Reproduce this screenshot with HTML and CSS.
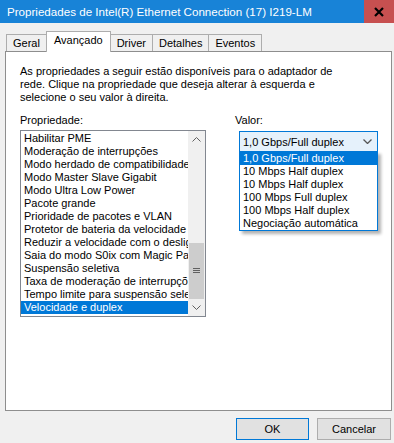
FILE: index.html
```html
<!DOCTYPE html>
<html lang="pt">
<head>
  <meta charset="UTF-8">
  <title>Propriedades de Intel(R) Ethernet Connection (17) I219-LM</title>
  <link rel="stylesheet" href="styles.css">
</head>
<body>
  <div class="titlebar">
    <span class="title">Propriedades de Intel(R) Ethernet Connection (17) I219-LM</span>
    <div class="close">
      <svg width="10" height="10" viewBox="0 0 10 10"><path d="M1 1 L9 9 M9 1 L1 9" stroke="#000" stroke-width="2.2"/></svg>
    </div>
  </div>

  <div class="tabs">
    <div class="tab">Geral</div>
    <div class="tab active">Avançado</div>
    <div class="tab">Driver</div>
    <div class="tab">Detalhes</div>
    <div class="tab">Eventos</div>
  </div>

  <div class="panel">
    <p class="intro">As propriedades a seguir estão disponíveis para o adaptador de<br>rede. Clique na propriedade que deseja alterar à esquerda e<br>selecione o seu valor à direita.</p>

    <div class="fields">
      <div class="field prop-field">
        <label>Propriedade:</label>
        <div class="listbox">
          <ul class="items">
            <li>Habilitar PME</li>
            <li>Moderação de interrupções</li>
            <li>Modo herdado de compatibilidade de</li>
            <li>Modo Master Slave Gigabit</li>
            <li>Modo Ultra Low Power</li>
            <li>Pacote grande</li>
            <li>Prioridade de pacotes e VLAN</li>
            <li>Protetor de bateria da velocidade de</li>
            <li>Reduzir a velocidade com o desligamento</li>
            <li>Saia do modo S0ix com Magic Packet</li>
            <li>Suspensão seletiva</li>
            <li>Taxa de moderação de interrupções</li>
            <li>Tempo limite para suspensão seletiva</li>
            <li class="selected">Velocidade e duplex</li>
          </ul>
          <div class="scrollbar">
            <div class="arrow">
              <svg width="9" height="5" viewBox="0 0 9 5"><path d="M0.5 4.5 L4.5 0.5 L8.5 4.5" fill="none" stroke="#606060"/></svg>
            </div>
            <div class="track"></div>
            <div class="thumb">
              <svg width="7" height="6" viewBox="0 0 7 6"><path d="M0 0.5 H7 M0 2.5 H7 M0 4.5 H7" stroke="#606060"/></svg>
            </div>
            <div class="arrow">
              <svg width="9" height="5" viewBox="0 0 9 5"><path d="M0.5 0.5 L4.5 4.5 L8.5 0.5" fill="none" stroke="#606060"/></svg>
            </div>
          </div>
        </div>
      </div>

      <div class="field value-field">
        <label>Valor:</label>
        <div class="combo">
          <span>1,0 Gbps/Full duplex</span>
          <svg width="9" height="5" viewBox="0 0 9 5"><path d="M0.5 0.5 L4.5 4.5 L8.5 0.5" fill="none" stroke="#555" stroke-width="1.3"/></svg>
          <ul class="dropdown">
            <li class="selected">1,0 Gbps/Full duplex</li>
            <li>10 Mbps Half duplex</li>
            <li>10 Mbps Half duplex</li>
            <li>100 Mbps Full duplex</li>
            <li>100 Mbps Half duplex</li>
            <li>Negociação automática</li>
          </ul>
        </div>
      </div>
    </div>
  </div>

  <div class="buttons">
    <button class="btn default">OK</button>
    <button class="btn">Cancelar</button>
  </div>
</body>
</html>
```

FILE: styles.css
```css
body {
  margin: 0;
  background: #f0f0f0;
  font-family: "Liberation Sans", Arial, sans-serif;
  font-size: 11px;
  color: #000;
}

ul {
  list-style: none;
  margin: 0;
  padding: 0;
}

/* title bar */
.titlebar {
  display: flex;
  justify-content: space-between;
  height: 23px;
  background: #1883d7;
  color: #fff;
}

.title {
  font-size: 11.6px;
  line-height: 23px;
  padding-left: 7px;
}

.close {
  width: 30px;
  height: 23px;
  background: #c75050;
  display: flex;
  align-items: center;
  justify-content: center;
}

/* tabs */
.tabs {
  display: flex;
  align-items: flex-start;
  height: 21px;
  margin-top: 8px;
  margin-bottom: -1px;
  padding-left: 6px;
  position: relative;
  z-index: 1;
}

.tab {
  margin-top: 3px;
  height: 16px;
  line-height: 17px;
  padding: 0 6px;
  border: 1px solid #adadad;
  border-bottom: none;
  margin-right: -1px;
  background: #f0f0f0;
}

.tab.active {
  margin-top: 0;
  height: 20px;
  line-height: 16px;
  padding: 0 7px;
  background: #fff;
  position: relative;
  z-index: 2;
}

/* panel */
.panel {
  box-sizing: border-box;
  margin-left: 5px;
  width: 387px;
  height: 360px;
  border: 1px solid #8e8e8e;
  background: #fff;
  padding: 13px 14px;
}

.intro {
  margin: 0;
  line-height: 13px;
}

.fields {
  display: flex;
  margin-top: 10px;
}

.field label {
  display: block;
  line-height: 13px;
}

.prop-field {
  width: 186px;
}

.value-field {
  margin-left: 29px;
}

/* list box */
.listbox {
  box-sizing: border-box;
  margin-top: 3px;
  height: 187px;
  border: 1px solid #828790;
  display: flex;
}

.items {
  flex: 1;
  overflow: hidden;
  padding-top: 1px;
}

.items li {
  line-height: 13px;
  padding-left: 3px;
  white-space: nowrap;
}

.items li.selected,
.dropdown li.selected {
  background: #0078d7;
  color: #fff;
}

.scrollbar {
  width: 17px;
  background: #f0f0f0;
  display: flex;
  flex-direction: column;
}

.arrow {
  height: 17px;
  display: flex;
  align-items: center;
  justify-content: center;
}

.track {
  flex: 1;
}

.thumb {
  height: 56px;
  margin: 0 1px;
  background: #cdcdcd;
  display: flex;
  align-items: center;
  justify-content: center;
}

/* combo box */
.combo {
  box-sizing: border-box;
  position: relative;
  margin-top: 4px;
  margin-left: 4px;
  width: 139px;
  height: 21px;
  border: 1px solid #0078d7;
  background: #e5f1fb;
  display: flex;
  align-items: center;
  justify-content: space-between;
  padding: 0 5px 0 3px;
}

.dropdown {
  box-sizing: border-box;
  position: absolute;
  top: 19px;
  left: -1px;
  width: 139px;
  border: 1px solid #0078d7;
  background: #fff;
  box-shadow: 3px 3px 3px rgba(0, 0, 0, 0.3);
}

.dropdown li {
  line-height: 13px;
  padding-left: 3px;
  white-space: nowrap;
}

/* buttons */
.buttons {
  display: flex;
  justify-content: flex-end;
  gap: 8px;
  margin-top: 7px;
  padding-right: 3px;
}

.btn {
  box-sizing: border-box;
  height: 22px;
  width: 74px;
  border: 1px solid #adadad;
  background: #e1e1e1;
  font-family: "Liberation Sans", Arial, sans-serif;
  font-size: 11px;
  color: #000;
  padding: 0;
}

.btn.default {
  width: 73px;
  border-color: #0078d7;
}
```
